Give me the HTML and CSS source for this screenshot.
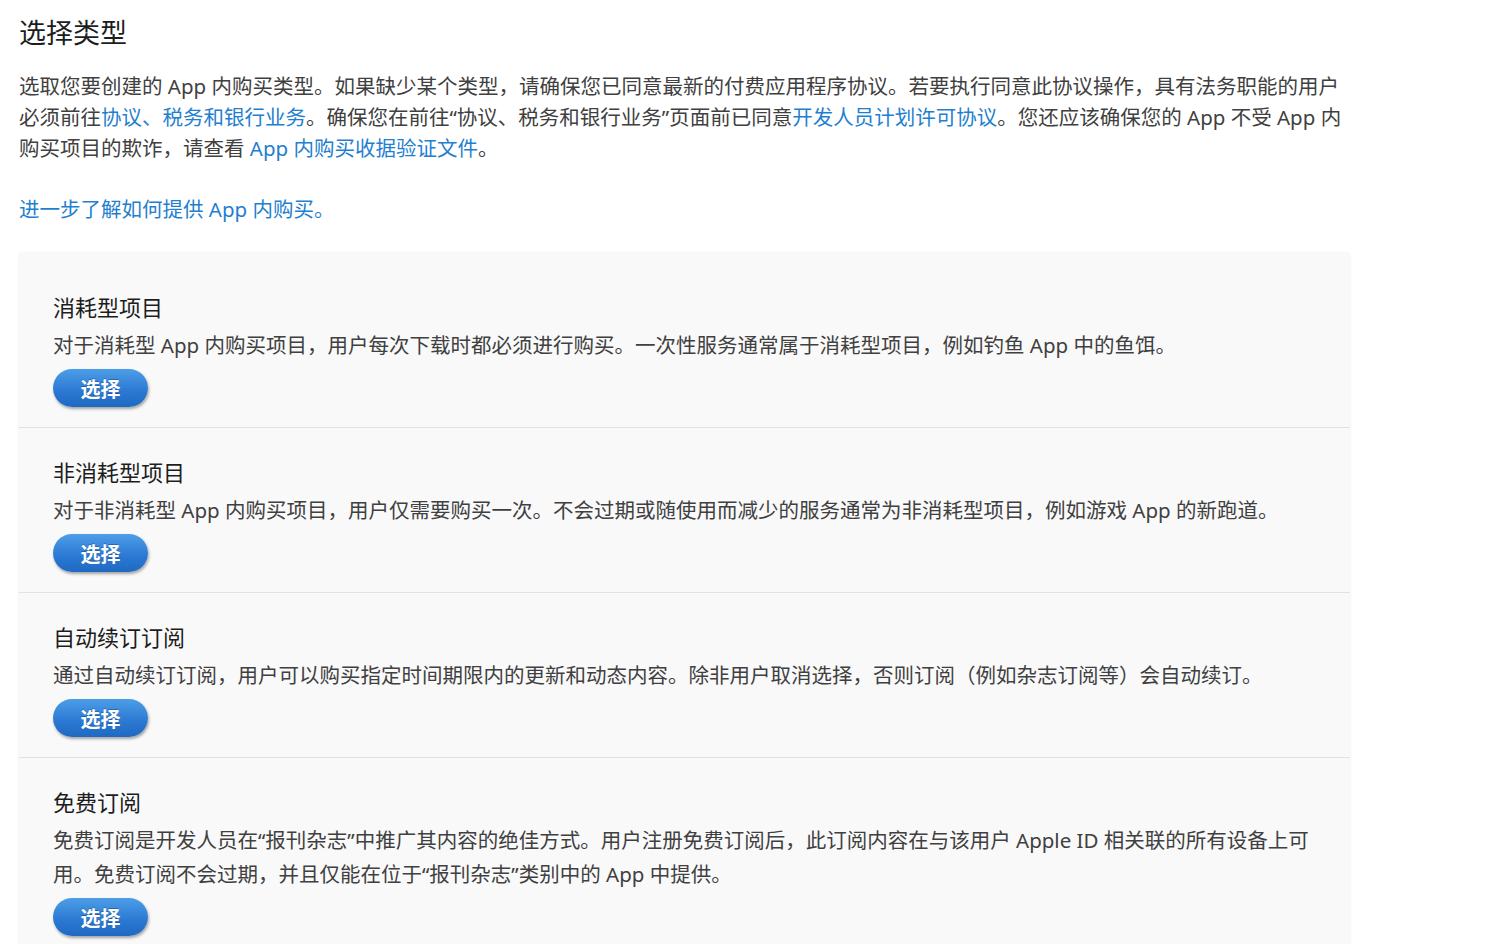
FILE: index.html
```html
<!DOCTYPE html>
<html lang="zh">
<head>
    <meta charset="UTF-8">
    <meta name="viewport" content="width=device-width, initial-scale=1.0">
    <title>选择类型</title>
    <link rel="stylesheet" href="styles.css">
</head>
<body>
    <div class="page">
        <h1>选择类型</h1>
        <p class="intro">
            选取您要创建的 App 内购买类型。如果缺少某个类型，请确保您已同意最新的付费应用程序协议。若要执行同意此协议操作，具有法务职能的用户必须前往<a href="#">协议、税务和银行业务</a>。确保您在前往“协议、税务和银行业务”页面前已同意<a href="#">开发人员计划许可协议</a>。您还应该确保您的 App 不受 App 内购买项目的欺诈，请查看 <a href="#">App 内购买收据验证文件</a>。
        </p>
        <p class="learn-more"><a href="#">进一步了解如何提供 App 内购买。</a></p>

        <div class="type-list">
            <div class="type-item">
                <h2>消耗型项目</h2>
                <p>对于消耗型 App 内购买项目，用户每次下载时都必须进行购买。一次性服务通常属于消耗型项目，例如钓鱼 App 中的鱼饵。</p>
                <button class="btn">选择</button>
            </div>
            <div class="type-item">
                <h2>非消耗型项目</h2>
                <p>对于非消耗型 App 内购买项目，用户仅需要购买一次。不会过期或随使用而减少的服务通常为非消耗型项目，例如游戏 App 的新跑道。</p>
                <button class="btn">选择</button>
            </div>
            <div class="type-item">
                <h2>自动续订订阅</h2>
                <p>通过自动续订订阅，用户可以购买指定时间期限内的更新和动态内容。除非用户取消选择，否则订阅（例如杂志订阅等）会自动续订。</p>
                <button class="btn">选择</button>
            </div>
            <div class="type-item">
                <h2>免费订阅</h2>
                <p>免费订阅是开发人员在“报刊杂志”中推广其内容的绝佳方式。用户注册免费订阅后，此订阅内容在与该用户 Apple ID 相关联的所有设备上可用。免费订阅不会过期，并且仅能在位于“报刊杂志”类别中的 App 中提供。</p>
                <button class="btn">选择</button>
            </div>
        </div>
    </div>
</body>
</html>
```

FILE: styles.css
```css
* {
    box-sizing: border-box;
    margin: 0;
    padding: 0;
}

body {
    font-family: "Noto Sans", "Noto Sans CJK SC", sans-serif;
    color: #404040;
    background: #fff;
    padding: 15px 19px 0;
}

.page {
    width: 1331px;
}

h1 {
    font-size: 27px;
    font-weight: normal;
    color: #1d1d1d;
    line-height: 36px;
}

.intro {
    margin-top: 20px;
    font-size: 20.5px;
    line-height: 31px;
}

a {
    color: #1f80cf;
    text-decoration: none;
}

.learn-more {
    margin-top: 30px;
    font-size: 20.5px;
    line-height: 31px;
}

.type-list {
    margin-top: 28px;
    padding-top: 10px;
    background: #f9f9fa;
    border-radius: 4px;
    box-shadow: 0 0 3px rgba(0, 0, 0, 0.08);
}

.type-item {
    padding: 29px 34px 20px;
    border-bottom: 1px solid #e2e2e4;
}

.type-item:last-child {
    border-bottom: none;
}

.type-item h2 {
    font-size: 22px;
    font-weight: normal;
    color: #1d1d1d;
    line-height: 30px;
}

.type-item p {
    margin-top: 6px;
    font-size: 20.5px;
    line-height: 34px;
}

.btn {
    display: block;
    margin-top: 7px;
    width: 95px;
    height: 38px;
    border: none;
    border-radius: 19px;
    background: linear-gradient(#4d9ee8, #2a78d2 60%, #1f69c2);
    color: #fff;
    font-family: "Noto Sans", "Noto Sans CJK SC", sans-serif;
    font-size: 20px;
    font-weight: bold;
    text-shadow: 0 -1px 0 rgba(0, 0, 0, 0.25);
    box-shadow: 1px 2px 3px rgba(0, 0, 0, 0.35);
    cursor: pointer;
}
```
